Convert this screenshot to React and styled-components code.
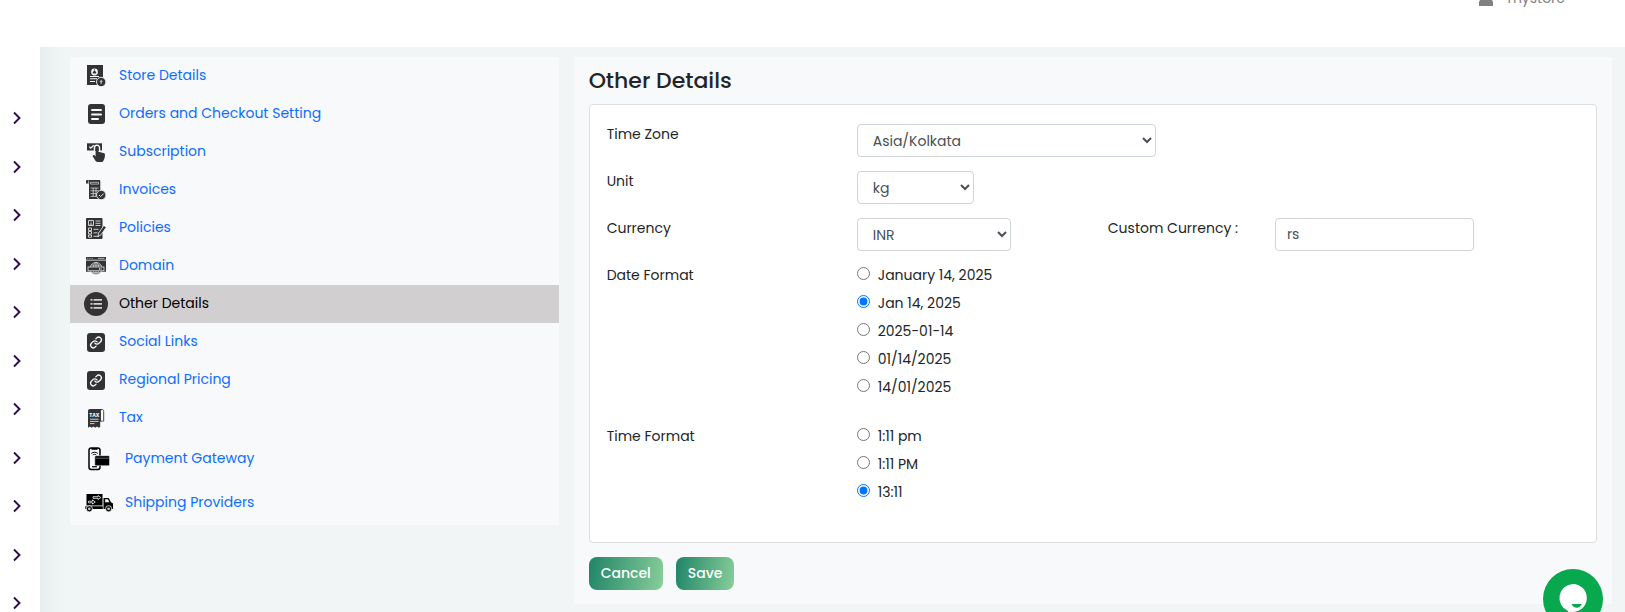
//-----------------------------------------------------------------------------
// Imports
//-----------------------------------------------------------------------------
import React from 'react'
import styled, { createGlobalStyle, css } from 'styled-components'

//-----------------------------------------------------------------------------
// Icons
//-----------------------------------------------------------------------------
const StoreIcon = () => (
  <Icon viewBox="0 0 24 24">
    <path d="M3 1h16v20H3z" />
    <circle cx="10.5" cy="8" r="3.4" fill="#f8f9fb" />
    <path d="M8.8 9.6V8l1.7-1.5L12.2 8v1.6z" />
    <circle cx="10.5" cy="5.9" r=".7" />
    <path d="M6 12.5h9M6 14.8h7M6 17.5h5" stroke="#f8f9fb" strokeWidth="1.1" />
    <circle cx="17.2" cy="18" r="4.7" stroke="#f8f9fb" strokeWidth=".9" />
    <path d="M17.2 15.8l1.8 2h-1.1v2h-1.4v-2h-1.1z" fill="#b9babb" />
  </Icon>
)

const OrdersIcon = () => (
  <Icon viewBox="0 0 24 24">
    <rect x="4" y="2" width="17" height="20" rx="3" />
    <path d="M8 8h9M8 12.5h9M8 17h6" stroke="#f8f9fb" strokeWidth="2" strokeLinecap="round" />
  </Icon>
)

const SubscriptionIcon = () => (
  <Icon viewBox="0 0 24 24">
    <path d="M3 3.3h15v7.2H3z" />
    <path d="M5.3 6.6l1.5 1.5 2.9-2.9" fill="none" stroke="#f8f9fb" strokeWidth="1.3" />
    <path d="M10.5 11V7.8a2.5 2.5 0 0 1 5 0V11" stroke="#f8f9fb" strokeWidth="1.5" />
    <path d="M11.6 16.5V7.7a1.4 1.4 0 0 1 2.8 0v4l5 1.2c1.2.3 1.7 1 1.6 2.2-.1 2.6-.8 4.5-1.8 6.1-.3.5-.7.8-1.3.8h-4.2c-1.6 0-2.2-1.1-3-2.4l-1.9-3.2c-.5-.9.6-1.9 1.5-1.3z" />
  </Icon>
)

const InvoicesIcon = () => (
  <Icon viewBox="0 0 24 24">
    <path d="M2 5.5V3.3C2 2.5 2.5 2 3.3 2H15c.8 0 1.3.5 1.3 1.3V21H5V5.5z" />
    <path d="M4.6 2.5v3.5M6.5 4.3h8v1.8h-8z" fill="none" stroke="#c9cacb" strokeWidth=".8" />
    <path d="M6.5 10h8M6.5 12.8h8M6.5 15.6h6M6.5 18.4h6M9.2 10v8.5M12 10v8.5" fill="none" stroke="#d4d5d6" strokeWidth=".8" />
    <circle cx="17.2" cy="17" r="4.7" stroke="#e4e5e6" strokeWidth=".9" />
    <path d="M15 17l1.6 1.6 3-3" fill="none" stroke="#e4e5e6" strokeWidth="1" />
  </Icon>
)

const PoliciesIcon = () => (
  <Icon viewBox="0 0 24 24">
    <rect x="2" y="2" width="16.5" height="21" rx="1" />
    <g fill="none" stroke="#dcddde" strokeWidth=".9">
      <path d="M4.5 4.5h5v5h-5zM11.5 5h5M11.5 7.3h5M11.5 9.5h5" />
      <path d="M5.8 9l1.2-1.6L8.2 9M7 5.5v1" />
      <path d="M4.5 12h3v2.5h-3zM4.5 15.5h3V18h-3zM4.5 19h3v2.2h-3zM9.5 13.3h5M9.5 16.8h4M9.5 20.3h5.5" />
    </g>
    <path d="M14.5 17.2l5.3-7.7 2.5 1.8-5.4 7.6-2.9 1.5z" stroke="#f8f9fb" strokeWidth=".8" />
  </Icon>
)

const DomainIcon = () => (
  <Icon viewBox="0 0 24 24">
    <path d="M2 3h20v2.8H2zM2 6.6h20v11.2H2z" />
    <path d="M3.3 4.4h1M5.5 4.4h1M7.7 4.4h1M14 4.4h6.5" stroke="#cfd0d1" strokeWidth=".8" />
    <circle cx="12" cy="14.5" r="6" stroke="#dcddde" strokeWidth=".8" />
    <g fill="none" stroke="#dcddde" strokeWidth=".7">
      <ellipse cx="12" cy="14.5" rx="2.8" ry="6" />
      <path d="M12 8.5v12M7.3 11.2h9.4M7.3 18.6h9.4" />
    </g>
    <rect x="4" y="13" width="16" height="3.8" stroke="#e4e5e6" strokeWidth=".8" />
    <path d="M15.5 14v2M17 14v2" stroke="#e4e5e6" strokeWidth=".7" />
  </Icon>
)

const OtherIcon = () => (
  <Icon viewBox="0 0 24 24">
    <circle cx="12" cy="12" r="12" />
    <path d="M9.5 7.8h8.5M9.5 11.8h8.5M9.5 15.8h8.5" stroke="#d1cfd0" strokeWidth="1.7" />
    <path d="M6.5 7.8h2M6.5 11.8h2M6.5 15.8h2" stroke="#d1cfd0" strokeWidth="1.7" />
  </Icon>
)

const LinkIcon = () => (
  <Icon viewBox="0 0 24 24">
    <rect x="3" y="3" width="18" height="19" rx="3" />
    <g transform="translate(5.5 6) scale(.54)" fill="none" stroke="#f8f9fb" strokeWidth="2.4" strokeLinecap="round" strokeLinejoin="round">
      <path d="M10 13a5 5 0 0 0 7.54.54l3-3a5 5 0 0 0-7.07-7.07l-1.72 1.71" />
      <path d="M14 11a5 5 0 0 0-7.54-.54l-3 3a5 5 0 0 0 7.07 7.07l1.71-1.71" />
    </g>
  </Icon>
)

const TaxIcon = () => (
  <Icon viewBox="0 0 24 24">
    <path d="M6 3h12v18.8l-1.6-1.3-1.6 1.3-1.8-1.3-1.8 1.3-1.8-1.3-1.8 1.3L6 20.5l-2 1.3V5c0-1.2.8-2 2-2z" />
    <path d="M16.5 5.3c0-2.4 3.2-2.4 3.2 0v9.9h-3.2z" fill="#f8f9fb" stroke="#333" strokeWidth=".9" />
    <path d="M16.2 15.7H20V23h-3.8z" fill="#f8f9fb" />
    <TaxText x="5.2" y="11">TAX</TaxText>
    <path d="M6 13.2h8.5M6 15.4h8.5M6 17.6h4.5" stroke="#dcddde" strokeWidth=".9" />
  </Icon>
)

const PaymentIcon = () => (
  <Icon $large viewBox="0 0 30 30">
    <rect x="5" y="4" width="11" height="21.5" rx="2.2" fill="none" stroke="#000" strokeWidth="1.5" />
    <path d="M7.5 4h6v1.8h-6z" />
    <path d="M8 22.7h5" stroke="#000" strokeWidth="1.2" />
    <path d="M7.3 9.4c2-1.6 4.5-1.6 6.5 0M8.8 11c1.1-.9 2.4-.9 3.5 0" fill="none" stroke="#000" strokeWidth="1" />
    <rect x="10.8" y="11.7" width="14.7" height="10" rx="1.2" stroke="#f8f9fb" strokeWidth=".5" />
    <path d="M11.5 14.2H25" stroke="#6b6b6b" strokeWidth=".9" />
  </Icon>
)

const TruckIcon = () => (
  <Icon $large viewBox="0 0 30 30">
    <path d="M2.5 6h16v11.5h-16zM1.3 18.3h17.5v2.8H1.3zM19.5 10h5.2l2.3 4.2 2 1.3v5.6h-9.5z" />
    <path d="M21.2 11.3h2.8l1.3 2.9h-4.1z" fill="#f8f9fb" />
    <path d="M9 8.7h5V7.5l2.8 2-2.8 2v-1.2H9zM4.5 13.2h4V12l2.8 2-2.8 2v-1.2h-4z" fill="none" stroke="#f8f9fb" strokeWidth=".8" />
    <circle cx="5.3" cy="20.8" r="3.1" stroke="#f8f9fb" strokeWidth=".8" />
    <circle cx="24.6" cy="20.8" r="3.1" stroke="#f8f9fb" strokeWidth=".8" />
    <circle cx="5.3" cy="20.8" r="1.4" fill="#c4c5c6" />
    <circle cx="24.6" cy="20.8" r="1.4" fill="#c4c5c6" />
  </Icon>
)

const ChatIcon = () => (
  <svg width="60" height="60" viewBox="0 0 60 60" aria-hidden="true">
    <path d="M30 15a14 14 0 1 1-2.5 27.8L26 47l-1-5.1A14 14 0 0 1 30 15z" fill="#fff" />
    <path d="M28.5 35h10.3c-1.5 4.6-8 5.2-10.3 0z" fill="#07a84e" />
  </svg>
)

//-----------------------------------------------------------------------------
// Data
//-----------------------------------------------------------------------------
const menu = [
  { name: 'Store Details', icon: StoreIcon },
  { name: 'Orders and Checkout Setting', icon: OrdersIcon },
  { name: 'Subscription', icon: SubscriptionIcon },
  { name: 'Invoices', icon: InvoicesIcon },
  { name: 'Policies', icon: PoliciesIcon },
  { name: 'Domain', icon: DomainIcon },
  { name: 'Other Details', icon: OtherIcon, active: true },
  { name: 'Social Links', icon: LinkIcon },
  { name: 'Regional Pricing', icon: LinkIcon },
  { name: 'Tax', icon: TaxIcon },
  { name: 'Payment Gateway', icon: PaymentIcon, large: true },
  { name: 'Shipping Providers', icon: TruckIcon, large: true }
]

const sections = [
  'Dashboard', 'Orders', 'Products', 'Customers', 'Marketing', 'Discounts',
  'Reports', 'Pages', 'Themes', 'Apps', 'Settings'
]

const dateFormats = ['January 14, 2025', 'Jan 14, 2025', '2025-01-14', '01/14/2025', '14/01/2025']
const timeFormats = ['1:11 pm', '1:11 PM', '13:11']

//-----------------------------------------------------------------------------
// Components
//-----------------------------------------------------------------------------
const RadioGroup = ({ name, label, options, selected }) => (
  <Row role="radiogroup" aria-labelledby={`${name}-label`}>
    <Label as="span" id={`${name}-label`}>{label}</Label>
    <Options>
      {options.map(option => (
        <Option key={option}>
          <Radio type="radio" name={name} value={option} defaultChecked={option === selected} />
          {option}
        </Option>
      ))}
    </Options>
  </Row>
)

const App = () => {
  return (
    <Page>
      <GlobalStyle />
      <Header>
        <User href="#account">
          <svg width="14" height="16" viewBox="0 0 14 16" fill="currentColor" aria-hidden="true">
            <circle cx="7" cy="4" r="4" />
            <path d="M0 16v-3c0-2.5 1.7-4 4-4h6c2.3 0 4 1.5 4 4v3z" />
          </svg>
          mystore
        </User>
      </Header>
      <Body>
        <Rail aria-label="Sections">
          {sections.map(section => (
            <RailButton key={section} type="button" aria-label={section}>
              <svg width="8" height="14" viewBox="0 0 8 14" aria-hidden="true">
                <path d="M1 1.5L6.5 7 1 12.5" fill="none" stroke="#2b0f4d" strokeWidth="1.9" />
              </svg>
            </RailButton>
          ))}
        </Rail>
        <Content>
          <Menu>
            {menu.map(({ name, icon: MenuIcon, active, large }) => (
              <MenuItem
                key={name}
                href="#settings"
                aria-current={active ? 'page' : undefined}
                $active={active}
                $large={large}>
                <MenuIcon />
                <MenuName>{name}</MenuName>
              </MenuItem>
            ))}
          </Menu>
          <Panel>
            <Title>Other Details</Title>
            <Card>
              <Row>
                <Label htmlFor="timezone">Time Zone</Label>
                <Select id="timezone" $width={299} $wide>
                  <option>Asia/Kolkata</option>
                </Select>
              </Row>
              <Row>
                <Label htmlFor="unit">Unit</Label>
                <Select id="unit" $width={117}>
                  <option>kg</option>
                </Select>
              </Row>
              <Row>
                <Label htmlFor="currency">Currency</Label>
                <Select id="currency" $width={154}>
                  <option>INR</option>
                </Select>
                <Label htmlFor="custom">Custom Currency :</Label>
                <Input id="custom" type="text" defaultValue="rs" $width={199} />
              </Row>
              <RadioGroup name="date" label="Date Format" options={dateFormats} selected="Jan 14, 2025" />
              <RadioGroup name="time" label="Time Format" options={timeFormats} selected="13:11" />
            </Card>
            <Actions>
              <Button type="button">Cancel</Button>
              <Button type="button">Save</Button>
            </Actions>
          </Panel>
        </Content>
      </Body>
      <Chat type="button" aria-label="Chat">
        <ChatIcon />
      </Chat>
    </Page>
  )
}

//-----------------------------------------------------------------------------
// Styled Components
//-----------------------------------------------------------------------------
const GlobalStyle = createGlobalStyle`
  * {
    box-sizing: border-box;
  }

  body {
    margin: 0;
    background: #fff;
    color: #212529;
    font-family: Poppins, Inter, sans-serif;
    font-size: 14px;
    line-height: 21px;
  }
`

const Page = styled.div`
  height: 100vh;
  display: flex;
  flex-direction: column;
  overflow: hidden;
`

const Header = styled.header`
  flex: none;
  height: 98px;
  margin-top: -51px;
  padding-right: 60px;
  display: flex;
  align-items: center;
  justify-content: flex-end;
`

const User = styled.a`
  display: flex;
  align-items: center;
  gap: 14px;
  color: #808080;
  text-decoration: none;
`

const Body = styled.div`
  flex: 1;
  min-height: 0;
  display: flex;
`

const Rail = styled.nav`
  flex: none;
  width: 40px;
  padding-top: 47px;
`

const RailButton = styled.button`
  width: 100%;
  height: 48px;
  padding: 0 0 0 13px;
  border: 0;
  background: none;
  display: flex;
  align-items: center;

  &:nth-child(even) {
    height: 49px;
  }
`

const Content = styled.main`
  flex: 1;
  padding: 10px 13px 8px 30px;
  display: grid;
  grid-template-columns: minmax(0, 32fr) minmax(0, 68fr);
  gap: 15px;
  align-items: start;
  background: linear-gradient(to right, #e8eeed, #eff4f4 20px, #f1f5f6 40px);
`

const Menu = styled.nav`
  background: #f8f9fb;
`

const MenuItem = styled.a`
  height: ${props => props.$large ? 44 : 38}px;
  padding: 0 14px;
  display: flex;
  align-items: center;
  gap: 11px;
  color: #0d6efd;
  text-decoration: none;

  ${props => props.$active && css`
    background: #d1cfd0;
    color: #000;
  `}
`

const MenuName = styled.span`
  padding-bottom: 2px;
`

const Icon = styled.svg.attrs({ 'aria-hidden': true })`
  flex: none;
  width: ${props => props.$large ? 30 : 24}px;
  height: ${props => props.$large ? 30 : 24}px;
  fill: ${props => props.$large ? '#000' : '#333'};
`

const TaxText = styled.text`
  fill: #f8f9fb;
  font-size: 5px;
  font-weight: 700;
`

const Panel = styled.section`
  padding: 10px 15px 14px;
  background: #f8f9fb;
`

const Title = styled.h1`
  margin: 0 0 10px;
  font-size: 22px;
  font-weight: 500;
  line-height: 27px;
`

const Card = styled.form`
  padding: 19px 17px 25px;
  display: flex;
  flex-direction: column;
  gap: 14px;
  background: #fff;
  border: 1px solid #dfdfdf;
  border-radius: 4px;
`

const Row = styled.div`
  display: grid;
  grid-template-columns: 250fr 251fr 167fr 304fr;
  align-items: start;
`

const Label = styled.label`
  line-height: 21px;
`

const control = css`
  width: ${props => props.$width}px;
  height: 33px;
  padding: 0 11px;
  border: 1px solid #ced4da;
  border-radius: 4px;
  background: #fff;
  color: #495057;
  font: inherit;
`

const Select = styled.select`
  ${control}
  padding-right: 0;
  grid-column: ${props => props.$wide ? 'span 2' : 'auto'};
`

const Input = styled.input`
  ${control}
`

const Options = styled.div`
  padding-bottom: 14px;
  display: flex;
  flex-direction: column;
  gap: 7px;
`

const Option = styled.label`
  display: flex;
  align-items: flex-start;
  gap: 8px;
`

const Radio = styled.input`
  width: 13px;
  height: 13px;
  margin: 2px 0 0;
`

const Actions = styled.div`
  margin-top: 14px;
  display: flex;
  gap: 13px;
`

const Button = styled.button`
  height: 33px;
  padding: 0 12px;
  border: 0;
  border-radius: 8px;
  background: linear-gradient(100deg, #1f8467, #88ce99);
  color: #fff;
  font: inherit;
  font-weight: 500;
`

const Chat = styled.button`
  position: fixed;
  right: 22px;
  bottom: -17px;
  width: 60px;
  height: 60px;
  padding: 0;
  border: 0;
  border-radius: 50%;
  background: #07a84e;
`

export default App
